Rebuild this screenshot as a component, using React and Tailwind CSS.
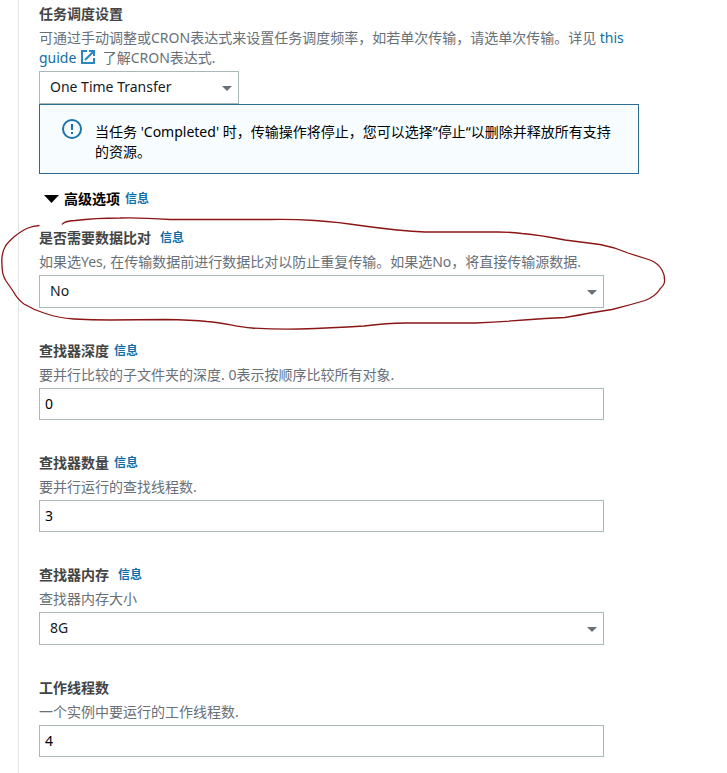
import { useState } from "react";

const INFO = "信息";

function InfoLink({ className }) {
  return (
    <a href="#info" className={`text-xs leading-5 font-bold text-[#0f6ea8] ${className}`}>
      {INFO}
    </a>
  );
}

function ExternalIcon() {
  return (
    <svg viewBox="0 0 16 16" className="mr-[3px] inline-block size-4 align-[-2px]" fill="none" stroke="#2b87c0" strokeWidth="2">
      <path d="M7 2H2v12h12V9" />
      <path d="M9 2h5v5M14 2 5 11" />
    </svg>
  );
}

function AlertIcon() {
  return (
    <svg viewBox="0 0 20 20" className="size-5 shrink-0" fill="none" stroke="#1a73ad" strokeWidth="2">
      <circle cx="10" cy="10" r="9" />
      <path d="M10 5v6M10 13v2" />
    </svg>
  );
}

function Select({ id, options, className }) {
  const [value, setValue] = useState(options[0]);
  return (
    <div className={`relative ${className}`}>
      <select
        id={id}
        value={value}
        onChange={(e) => setValue(e.target.value)}
        className="block h-[33px] w-full appearance-none border border-[#aab7b8] bg-white pr-8 pb-[2px] pl-[10px] text-[#16191f]"
      >
        {options.map((o) => (
          <option key={o}>{o}</option>
        ))}
      </select>
      <svg viewBox="0 0 10 5" className="pointer-events-none absolute top-[15px] right-[7px] h-[5px] w-[10px]" fill="#687078">
        <path d="M0 0h10L5 5z" />
      </svg>
    </div>
  );
}

function TextInput({ id, initial }) {
  const [value, setValue] = useState(initial);
  return (
    <input
      id={id}
      type="text"
      value={value}
      onChange={(e) => setValue(e.target.value)}
      className="block h-8 w-full border border-[#aab7b8] bg-white px-[5px] pb-[2px] text-black"
    />
  );
}

function Field({ id, label, info, desc, children }) {
  return (
    <div className="max-w-[565px]">
      <div className="flex h-7 items-center">
        <label htmlFor={id} className="font-bold text-[#444]">
          {label}
        </label>
        {info && <InfoLink className={info} />}
      </div>
      <p className="mb-[3px] text-[#687078]">{desc}</p>
      {children}
    </div>
  );
}

// Freehand red marker around the comparison option
function Marker() {
  return (
    <svg
      viewBox="0 0 727 773"
      className="pointer-events-none absolute top-0 left-0 h-[773px] w-[727px]"
      fill="none"
      stroke="#8b1414"
      strokeWidth="1.3"
      strokeLinejoin="round"
    >
      <path d="M39.5 225.5Q33 226 28 228T15 236Q6 244 5 247Q1 254 2 265Q2 275 6 281L13 291Q18 300 24 304Q34 310 44 313Q58 318 74 319Q92 320 110 320L165 319.5Q192 320 207 321.5C227 323 235 327 252 328Q275 329.5 300 329Q330 328 364 326Q388 323 405 323H475Q515 321 545 318.5L565 317.5Q580 315 590 313L612 309.5Q630 305 645 300.5Q656 296 660 289Q664 285 664.5 282Q665 275 662 270Q658 263 650 260L628 253Q614 247 600 244.5L565 240Q540 235 522 233.5Q510 232 498 232H425Q400 231 364 226Q338 222 315 220.5Q290 219 270 219.5H170Q140 217.5 120 218Q95 218 75 220.5Q64 221 62 224.5" />
    </svg>
  );
}

export default function App() {
  return (
    <div className="relative min-h-screen overflow-hidden bg-white pl-[18px] font-['Noto_Sans','Noto_Sans_CJK_SC',sans-serif] text-sm leading-5">
      <main className="min-h-screen border-l border-[#e3e5e5] pr-4 pb-4 pl-5">
        <section className="max-w-[600px]">
          <div className="flex h-7 items-center">
            <label htmlFor="schedule" className="font-bold text-[#444]">
              任务调度设置
            </label>
          </div>
          <p className="mb-[3px] text-[#687078]">
            可通过手动调整或CRON表达式来设置任务调度频率，如若单次传输，请选单次传输。详见{" "}
            <a href="#guide" className="text-[#0f6ea8]">
              this guide <ExternalIcon />
            </a>{" "}
            了解CRON表达式.
          </p>
          <Select id="schedule" options={["One Time Transfer", "Fixed Rate", "Cron Expression"]} className="w-[200px]" />
          <div role="alert" className="flex gap-[13px] border border-[#2b6d93] bg-[#f7fdff] pt-[14px] pr-5 pb-[11px] pl-[22px] text-black">
            <AlertIcon />
            <p className="mt-[3px]">
              当任务 'Completed' 时，传输操作将停止，您可以选择”停止“以删除并释放所有支持的资源。
            </p>
          </div>
        </section>

        <div className="flex h-[50px] items-center pl-[5px]">
          <button type="button" aria-expanded="true" className="flex items-center gap-[5px] font-bold text-black">
            <svg viewBox="0 0 15 8" className="h-2 w-[15px]" fill="currentColor">
              <path d="M0 0h15L7.5 8z" />
            </svg>
            高级选项
          </button>
          <InfoLink className="ml-[5px]" />
        </div>

        <div className="flex flex-col gap-[29px]">
          <Field
            id="compare"
            label="是否需要数据比对"
            info="ml-[9px]"
            desc="如果选Yes, 在传输数据前进行数据比对以防止重复传输。如果选No，将直接传输源数据."
          >
            <Select id="compare" options={["No", "Yes"]} className="w-full" />
          </Field>
          <Field id="depth" label="查找器深度" info="ml-[5px]" desc="要并行比较的子文件夹的深度. 0表示按顺序比较所有对象.">
            <TextInput id="depth" initial="0" />
          </Field>
          <Field id="number" label="查找器数量" info="ml-[5px]" desc="要并行运行的查找线程数.">
            <TextInput id="number" initial="3" />
          </Field>
          <Field id="memory" label="查找器内存" info="ml-[9px]" desc="查找器内存大小">
            <Select id="memory" options={["8G", "16G", "32G", "64G"]} className="w-full" />
          </Field>
          <Field id="threads" label="工作线程数" desc="一个实例中要运行的工作线程数.">
            <TextInput id="threads" initial="4" />
          </Field>
        </div>
      </main>
      <Marker />
    </div>
  );
}
